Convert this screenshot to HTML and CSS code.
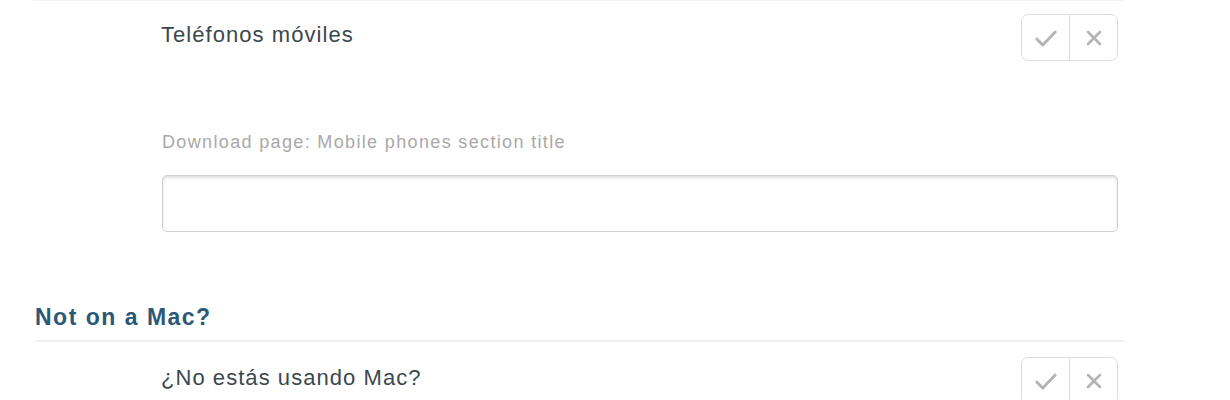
FILE: index.html
```html
<!DOCTYPE html>
<html lang="es">
<head>
<meta charset="utf-8">
<link rel="stylesheet" href="styles.css">
</head>
<body>
<div class="page">
  <div class="row first">
    <span class="value">Teléfonos móviles</span>
    <div class="btn-group">
      <span class="btn"><svg viewBox="0 0 24 24" width="26" height="26"><path d="M3.5 13 L9 18.5 L20.5 6.5" fill="none" stroke="#b4b4b4" stroke-width="2.7" stroke-linecap="round" stroke-linejoin="round"/></svg></span>
      <span class="btn"><svg viewBox="0 0 24 24" width="22" height="22"><path d="M5.5 5.5 L18.5 18.5 M18.5 5.5 L5.5 18.5" fill="none" stroke="#b4b4b4" stroke-width="2.9" stroke-linecap="round"/></svg></span>
    </div>
  </div>
  <div class="field">
    <div class="hint">Download page: Mobile phones section title</div>
    <input class="text-input" type="text">
  </div>
  <h2 class="section-title">Not on a Mac?</h2>
  <div class="row second">
    <span class="value">¿No estás usando Mac?</span>
    <div class="btn-group">
      <span class="btn"><svg viewBox="0 0 24 24" width="26" height="26"><path d="M3.5 13 L9 18.5 L20.5 6.5" fill="none" stroke="#b4b4b4" stroke-width="2.7" stroke-linecap="round" stroke-linejoin="round"/></svg></span>
      <span class="btn"><svg viewBox="0 0 24 24" width="22" height="22"><path d="M5.5 5.5 L18.5 18.5 M18.5 5.5 L5.5 18.5" fill="none" stroke="#b4b4b4" stroke-width="2.9" stroke-linecap="round"/></svg></span>
    </div>
  </div>
</div>
</body>
</html>
```
FILE: styles.css
```css
html, body {
  margin: 0;
  padding: 0;
  background: #ffffff;
}
body {
  font-family: "Liberation Sans", Arial, sans-serif;
  overflow: hidden;
  height: 400px;
}
.page {
  margin: 0 105px 0 33px;
  border-top: 1px solid #f4f4f4;
}
.row {
  display: flex;
  justify-content: space-between;
  align-items: center;
  padding: 0 7px 0 128px;
  height: 47px;
}
.row.first {
  margin-top: 13px;
}
.row.second {
  margin-top: 15px;
}
.value {
  font-size: 22px;
  color: #3c484d;
  letter-spacing: 1.05px;
  margin-top: -5px;
}
.btn-group {
  display: flex;
  border: 1px solid #dedede;
  border-radius: 7px;
  box-sizing: border-box;
  height: 47px;
}
.btn {
  width: 47px;
  display: flex;
  align-items: center;
  justify-content: center;
}
.btn + .btn {
  border-left: 1px solid #dedede;
}
.field {
  padding: 0 7px 0 129px;
  margin-top: 71px;
}
.hint {
  font-size: 18px;
  color: #a9a9a9;
  letter-spacing: 1.35px;
  line-height: 20px;
}
.text-input {
  display: block;
  box-sizing: border-box;
  width: 100%;
  height: 57px;
  margin-top: 23px;
  border: 1px solid #cfcfcf;
  border-radius: 5px;
  box-shadow: inset 0 2px 3px rgba(0, 0, 0, 0.12);
  background: #fff;
}
.section-title {
  margin: 73px 0 0 2px;
  font-size: 23px;
  font-weight: 600;
  color: #2b5876;
  letter-spacing: 1.5px;
  line-height: 24px;
  padding-bottom: 11px;
  border-bottom: 2px solid #f0f0f0;
}
```
